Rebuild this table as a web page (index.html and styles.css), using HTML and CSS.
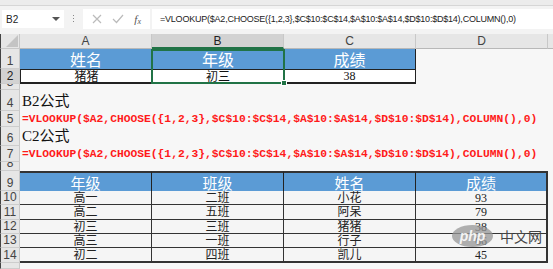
FILE: index.html
```html
<!DOCTYPE html>
<html>
<head>
<meta charset="utf-8">
<link rel="stylesheet" href="styles.css">
</head>
<body>
<div class="app">
  <div class="ribbon"></div>
  <div class="fbar">
    <div class="namebox"><span>B2</span><svg width="8" height="5" viewBox="0 0 8 5"><path d="M0 0 L8 0 L4 4 Z" fill="#555"/></svg></div>
    <div class="dots"><i></i><i></i><i></i></div>
    <div class="btns">
      <svg width="10" height="10" viewBox="0 0 10 10"><path d="M1 1 L9 9 M9 1 L1 9" stroke="#bbb" stroke-width="1.2"/></svg>
      <svg width="12" height="10" viewBox="0 0 12 10"><path d="M1 5 L4.5 8.5 L11 1" stroke="#bbb" stroke-width="1.2" fill="none"/></svg>
      <span class="fx">f<sub>x</sub></span>
    </div>
    <div class="finput">=VLOOKUP($A2,CHOOSE({1,2,3},$C$10:$C$14,$A$10:$A$14,$D$10:$D$14),COLUMN(),0)</div>
  </div>
  <div class="sheet">
    <div class="corner"><svg width="12" height="12" viewBox="0 0 12 12"><path d="M12 0 L12 12 L0 12 Z" fill="#c4c4c4"/></svg></div>
    <div class="ch">A</div>
    <div class="ch sel">B</div>
    <div class="ch">C</div>
    <div class="ch">D</div>
    <div class="ch rest"></div>

    <div class="rh">1</div>
    <div class="c blue">姓名</div>
    <div class="c blue selcell">年级<span class="selbox"><span class="handle"></span></span></div>
    <div class="c blue last">成绩</div>
    <div class="c span2"></div>

    <div class="rh selr">2</div>
    <div class="c t2 first">猪猪</div>
    <div class="c t2">初三</div>
    <div class="c t2 last num">38</div>
    <div class="c span2"></div>

    <div class="rh">3</div>
    <div class="c wide"></div>

    <div class="rh">4</div>
    <div class="c wide heading">B2公式</div>

    <div class="rh">5</div>
    <div class="c wide formula">=VLOOKUP($A2,CHOOSE({1,2,3},$C$10:$C$14,$A$10:$A$14,$D$10:$D$14),COLUMN(),0)</div>

    <div class="rh">6</div>
    <div class="c wide heading">C2公式</div>

    <div class="rh">7</div>
    <div class="c wide formula">=VLOOKUP($A2,CHOOSE({1,2,3},$C$10:$C$14,$A$10:$A$14,$D$10:$D$14),COLUMN(),0)</div>

    <div class="rh">8</div>
    <div class="c wide"></div>

    <div class="rh">9</div>
    <div class="c bh">年级</div>
    <div class="c bh">班级</div>
    <div class="c bh">姓名</div>
    <div class="c bh end">成绩</div>
    <div class="c"></div>

    <div class="rh">10</div>
    <div class="c bd">高一</div><div class="c bd">二班</div><div class="c bd">小花</div><div class="c bd end num">93</div><div class="c"></div>
    <div class="rh">11</div>
    <div class="c bd">高二</div><div class="c bd">五班</div><div class="c bd">阿呆</div><div class="c bd end num">79</div><div class="c"></div>
    <div class="rh">12</div>
    <div class="c bd">初三</div><div class="c bd">三班</div><div class="c bd">猪猪</div><div class="c bd end num">38</div><div class="c"></div>
    <div class="rh">13</div>
    <div class="c bd">高三</div><div class="c bd">一班</div><div class="c bd">行子</div><div class="c bd end num">66</div><div class="c"></div>
    <div class="rh">14</div>
    <div class="c bd lastrow">初二</div><div class="c bd lastrow">四班</div><div class="c bd lastrow">凯儿</div><div class="c bd end lastrow num">45</div><div class="c"></div>

    <div class="rh"></div>
    <div class="c wide"></div>
  </div>
  <div class="watermark"><span class="php">php</span><span class="cn">中文网</span></div>
</div>
</body>
</html>
```

FILE: styles.css
```css
* { box-sizing: border-box; }
html, body { margin: 0; padding: 0; }
body { width: 553px; height: 269px; overflow: hidden; background: #f7f7f7; font-family: "Liberation Sans", "Noto Sans CJK SC", sans-serif; }
.app { position: relative; width: 553px; height: 269px; overflow: hidden; }

.ribbon { height: 6px; background: #ececec; border-bottom: 1px solid #d6d6d6; }

.fbar { height: 28px; background: #f3f3f3; display: flex; align-items: flex-start; padding-top: 3px; }
.namebox { flex: 0 0 62px; height: 18px; margin-left: 2px; margin-top: 1px; background: #fff; display: flex; align-items: center; justify-content: space-between; padding: 0 4px; font-size: 10px; color: #222; }
.dots { flex: 0 0 19px; display: flex; flex-direction: column; align-items: center; gap: 2px; padding-top: 6px; }
.dots i { display: block; width: 1px; height: 1px; background: #888; }
.btns { flex: 0 0 67px; height: 20px; background: #fff; display: flex; align-items: center; justify-content: space-around; padding: 0 4px; }
.fx { font-family: "Liberation Serif", serif; font-style: italic; font-size: 11px; color: #555; }
.fx sub { font-size: 8px; vertical-align: -1px; }
.finput { flex: 1 1 auto; min-width: 0; overflow: hidden; margin-left: 2px; height: 20px; background: #fff; font-size: 9px; letter-spacing: -0.22px; line-height: 20px; padding-left: 8px; color: #222; white-space: nowrap; }

.sheet { display: grid; grid-template-columns: 20px 132px 132px 132px 132px 1fr; grid-template-rows: 15px 20px 15px 6px 21px 16px 19px 16px 9px 20px 14px 15px 14px 14px 15px 1fr; height: 235px; }

.corner { background: #e6e6e6; border-left: 1px solid #444; border-right: 1px solid #c8c8c8; border-bottom: 1px solid #c8c8c8; display: flex; align-items: flex-end; justify-content: flex-end; padding: 0 1px 1px 0; }
.ch { background: #e6e6e6; border-right: 1px solid #c8c8c8; border-bottom: 1px solid #b8b8b8; font-size: 12px; color: #444; display: flex; align-items: center; justify-content: center; }
.ch.sel { background: #d2d2d2; border-bottom: 2px solid #217346; color: #222; }
.ch.rest { border-right: none; }

.rh { background: #e6e6e6; border-left: 1px solid #444; border-right: 1px solid #c8c8c8; border-bottom: 1px solid #cdcdcd; font-size: 12px; color: #444; display: flex; align-items: flex-end; justify-content: center; line-height: 13px; overflow: hidden; }
.rh.selr { background: #d2d2d2; color: #222; }

.c { font-family: "Liberation Serif", "Noto Sans CJK SC", serif; font-size: 13px; color: #111; display: flex; align-items: center; justify-content: center; white-space: nowrap; }
.c.span2 { grid-column: span 2; }
.c.wide { grid-column: span 5; justify-content: flex-start; align-items: flex-end; padding-left: 2px; }

.blue { background: #5b9bd5; color: #fff; font-size: 16px; }
.blue.last { border-right: 1px solid #222; }
.t2 { background: #fff; border-top: 1px solid #222; border-bottom: 2px solid #222; font-size: 12px; }
.t2.first { border-left: 1px solid #222; }
.t2.last { border-right: 1px solid #222; }
.num { font-family: "Liberation Serif", serif; }

.heading { font-size: 15px; color: #111; line-height: 19px; }
.formula { font-family: "Liberation Mono", monospace; font-weight: bold; font-size: 11.3px; color: #ff1a1a; line-height: 15px; }

.bh { background: #5b9bd5; color: #fff; font-size: 15px; border-top: 2px solid #333; border-right: 1px solid #222; }
.bh.end { border-right: 2px solid #333; }
.bd { background: #f5f5f5; border-bottom: 1px solid #333; border-right: 1px solid #333; font-size: 12px; line-height: 12px; color: #222; }
.bd.end { border-right: 2px solid #333; }
.bd.lastrow { border-bottom: 2px solid #333; }

.selcell { position: relative; }
.selbox { position: absolute; left: -1px; top: 0; width: 134px; height: 35px; border: 2px solid #217346; pointer-events: none; }
.handle { position: absolute; right: -4px; bottom: -4px; width: 6px; height: 6px; background: #217346; border: 1px solid #fff; }

.watermark { position: absolute; left: 452px; top: 225px; display: flex; align-items: center; gap: 7px; }
.php { display: flex; align-items: center; justify-content: center; width: 41px; height: 22px; border-radius: 50%; background: rgba(150,150,150,0.75); color: rgba(255,255,255,0.9); font-family: "Liberation Sans", sans-serif; font-weight: bold; font-size: 14px; font-style: italic; }
.cn { font-family: "Noto Sans CJK SC", sans-serif; font-size: 14px; color: #444; }
```
